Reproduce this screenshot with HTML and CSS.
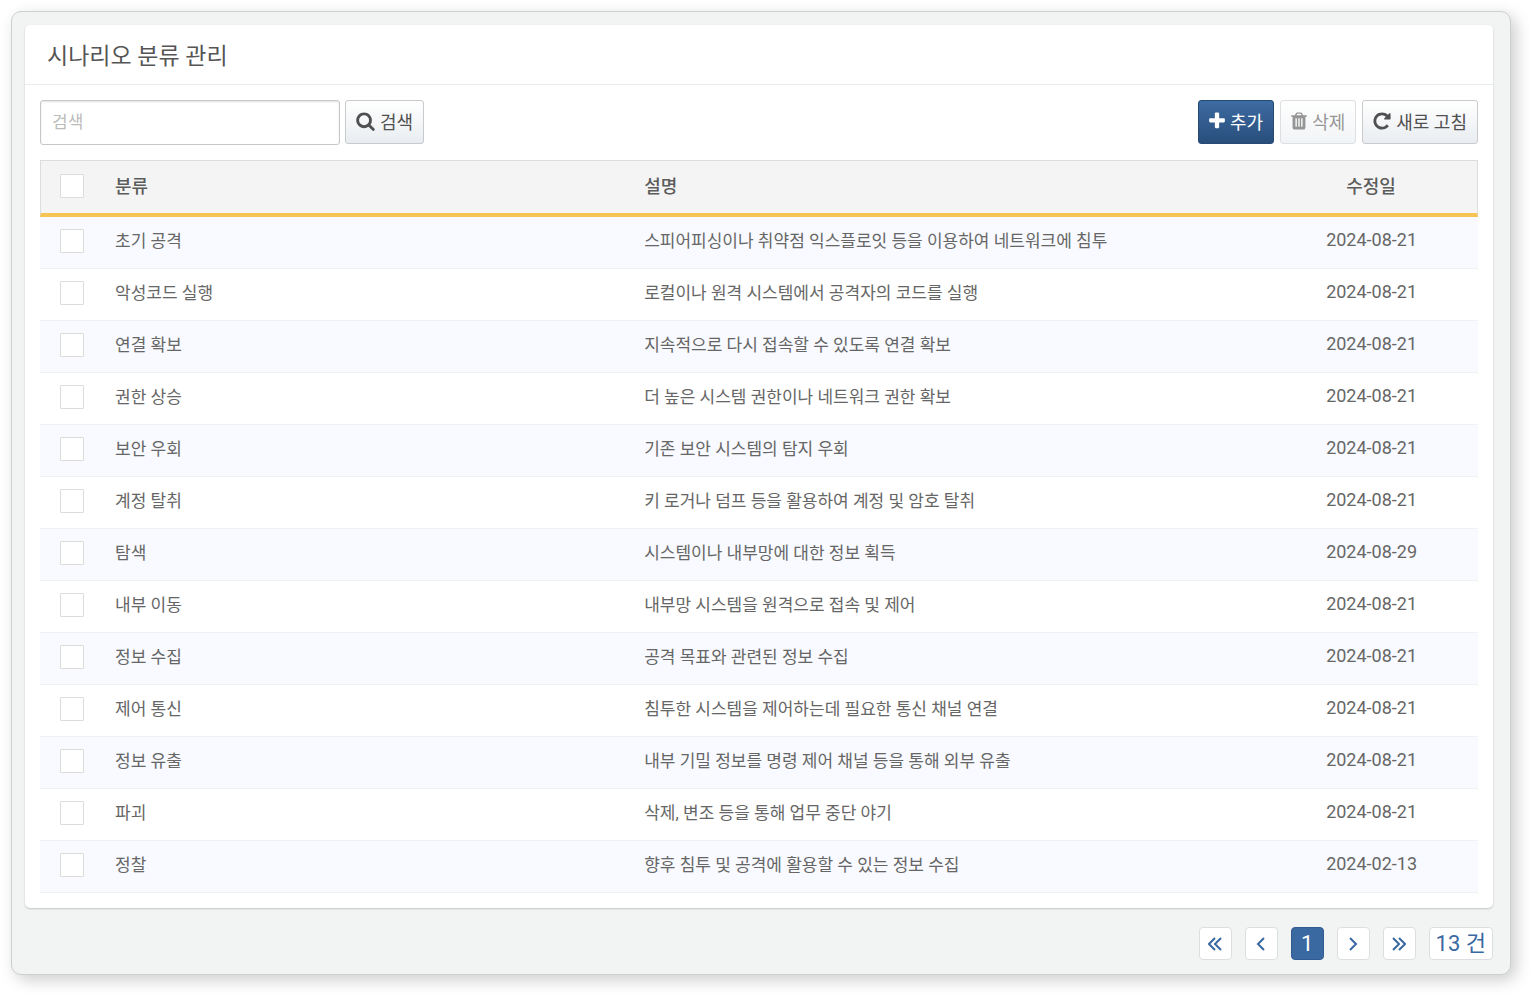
FILE: index.html
```html
<!DOCTYPE html>
<html lang="ko">
<head>
<meta charset="utf-8">
<title>시나리오 분류 관리</title>
<link rel="stylesheet" href="styles.css">
</head>
<body>
<main class="window">
  <section class="panel">
    <h1 class="panel-title">시나리오 분류 관리</h1>
    <div class="panel-body">
      <div class="toolbar">
        <form class="group">
          <input class="search" type="text" placeholder="검색" aria-label="검색">
          <button class="btn" type="button"><svg class="icon" width="19" height="20" viewBox="64 0 1664 1792"><path d="M1216 832q0-185-131.5-316.5t-316.5-131.5-316.5 131.5-131.5 316.5 131.5 316.5 316.5 131.5 316.5-131.5 131.5-316.5zm512 832q0 52-38 90t-90 38q-54 0-90-38l-343-342q-179 124-399 124-143 0-273.5-55.5t-225-150-150-225-55.5-273.5 55.5-273.5 150-225 225-150 273.5-55.5 273.5 55.5 225 150 150 225 55.5 273.5q0 220-124 399l343 343q37 37 37 90z"/></svg>검색</button>
        </form>
        <div class="group group-actions">
          <button class="btn btn-primary" type="button"><svg class="icon" width="16" height="20" viewBox="192 0 1408 1792"><path d="M1600 736v192q0 40-28 68t-68 28h-416v416q0 40-28 68t-68 28h-192q-40 0-68-28t-28-68v-416h-416q-40 0-68-28t-28-68v-192q0-40 28-68t68-28h416v-416q0-40 28-68t68-28h192q40 0 68 28t28 68v416h416q40 0 68 28t28 68z"/></svg>추가</button>
          <button class="btn" type="button" disabled><svg class="icon" width="16" height="20" viewBox="192 0 1408 1792"><path d="M704 1376v-704q0-14-9-23t-23-9h-64q-14 0-23 9t-9 23v704q0 14 9 23t23 9h64q14 0 23-9t9-23zm256 0v-704q0-14-9-23t-23-9h-64q-14 0-23 9t-9 23v704q0 14 9 23t23 9h64q14 0 23-9t9-23zm256 0v-704q0-14-9-23t-23-9h-64q-14 0-23 9t-9 23v704q0 14 9 23t23 9h64q14 0 23-9t9-23zm-544-992h448l-48-117q-7-9-17-11h-317q-10 2-17 11zm928 32v64q0 14-9 23t-23 9h-96v948q0 83-47 143.5t-113 60.5h-832q-66 0-113-58.5t-47-141.5v-952h-96q-14 0-23-9t-9-23v-64q0-14 9-23t23-9h309l70-167q15-37 54-63t79-26h320q40 0 79 26t54 63l70 167h309q14 0 23 9t9 23z"/></svg>삭제</button>
          <button class="btn" type="button"><svg class="icon" width="18" height="20" viewBox="128 0 1536 1792"><path d="M1664 256v448q0 26-19 45t-45 19h-448q-42 0-59-40-17-39 14-69l138-138q-148-137-349-137-104 0-198.5 40.5t-163.5 109.5-109.5 163.5-40.5 198.5 40.5 198.5 109.5 163.5 163.5 109.5 198.5 40.5q119 0 225-52t179-147q7-10 23-12 15 0 25 9l137 138q9 8 9.5 20.5t-7.5 22.5q-109 132-264 204.5t-327 72.5q-156 0-298-61t-245-164-164-245-61-298 61-298 164-245 245-164 298-61q147 0 284.5 55.5t244.5 156.5l130-129q29-31 70-14 39 17 39 59z"/></svg>새로 고침</button>
        </div>
      </div>
      <table class="grid">
        <thead>
          <tr><th class="col-check"><input class="check" type="checkbox" aria-label="전체 선택"></th><th class="col-name">분류</th><th>설명</th><th class="col-date">수정일</th></tr>
        </thead>
        <tbody>
          <tr><td><input class="check" type="checkbox" aria-label="초기 공격"></td><td>초기 공격</td><td>스피어피싱이나 취약점 익스플로잇 등을 이용하여 네트워크에 침투</td><td class="date">2024-08-21</td></tr>
          <tr><td><input class="check" type="checkbox" aria-label="악성코드 실행"></td><td>악성코드 실행</td><td>로컬이나 원격 시스템에서 공격자의 코드를 실행</td><td class="date">2024-08-21</td></tr>
          <tr><td><input class="check" type="checkbox" aria-label="연결 확보"></td><td>연결 확보</td><td>지속적으로 다시 접속할 수 있도록 연결 확보</td><td class="date">2024-08-21</td></tr>
          <tr><td><input class="check" type="checkbox" aria-label="권한 상승"></td><td>권한 상승</td><td>더 높은 시스템 권한이나 네트워크 권한 확보</td><td class="date">2024-08-21</td></tr>
          <tr><td><input class="check" type="checkbox" aria-label="보안 우회"></td><td>보안 우회</td><td>기존 보안 시스템의 탐지 우회</td><td class="date">2024-08-21</td></tr>
          <tr><td><input class="check" type="checkbox" aria-label="계정 탈취"></td><td>계정 탈취</td><td>키 로거나 덤프 등을 활용하여 계정 및 암호 탈취</td><td class="date">2024-08-21</td></tr>
          <tr><td><input class="check" type="checkbox" aria-label="탐색"></td><td>탐색</td><td>시스템이나 내부망에 대한 정보 획득</td><td class="date">2024-08-29</td></tr>
          <tr><td><input class="check" type="checkbox" aria-label="내부 이동"></td><td>내부 이동</td><td>내부망 시스템을 원격으로 접속 및 제어</td><td class="date">2024-08-21</td></tr>
          <tr><td><input class="check" type="checkbox" aria-label="정보 수집"></td><td>정보 수집</td><td>공격 목표와 관련된 정보 수집</td><td class="date">2024-08-21</td></tr>
          <tr><td><input class="check" type="checkbox" aria-label="제어 통신"></td><td>제어 통신</td><td>침투한 시스템을 제어하는데 필요한 통신 채널 연결</td><td class="date">2024-08-21</td></tr>
          <tr><td><input class="check" type="checkbox" aria-label="정보 유출"></td><td>정보 유출</td><td>내부 기밀 정보를 명령 제어 채널 등을 통해 외부 유출</td><td class="date">2024-08-21</td></tr>
          <tr><td><input class="check" type="checkbox" aria-label="파괴"></td><td>파괴</td><td>삭제, 변조 등을 통해 업무 중단 야기</td><td class="date">2024-08-21</td></tr>
          <tr><td><input class="check" type="checkbox" aria-label="정찰"></td><td>정찰</td><td>향후 침투 및 공격에 활용할 수 있는 정보 수집</td><td class="date">2024-02-13</td></tr>
        </tbody>
      </table>
    </div>
  </section>
  <nav class="pager" aria-label="페이지">
    <button class="page" type="button" aria-label="처음"><svg class="chevron" width="14" height="14" viewBox="0 0 14 14"><path d="M7 1L1 7l6 6M13 1L7 7l6 6"/></svg></button>
    <button class="page" type="button" aria-label="이전"><svg class="chevron" width="14" height="14" viewBox="0 0 14 14"><path d="M10 1L4 7l6 6"/></svg></button>
    <button class="page page-current" type="button" aria-current="page">1</button>
    <button class="page" type="button" aria-label="다음"><svg class="chevron" width="14" height="14" viewBox="0 0 14 14"><path d="M4 1l6 6-6 6"/></svg></button>
    <button class="page" type="button" aria-label="마지막"><svg class="chevron" width="14" height="14" viewBox="0 0 14 14"><path d="M1 1l6 6-6 6M7 1l6 6-6 6"/></svg></button>
    <span class="page">13 건</span>
  </nav>
</main>
</body>
</html>
```

FILE: styles.css
```css
* {
  box-sizing: border-box;
}

body {
  margin: 0;
  padding: 11px 22px 22px 11px;
  background: #fff;
  color: #555;
  font-family: Roboto, "Noto Sans CJK KR", sans-serif;
  font-size: 17px;
}

button,
input {
  margin: 0;
  font: inherit;
}

.window {
  padding: 13px 17px 14px 13px;
  border: 1px solid #ccd0cf;
  border-radius: 10px;
  background: #f2f4f4;
  box-shadow: 5px 5px 16px rgba(0, 0, 0, 0.2);
}

.panel {
  border-radius: 5px;
  background: #fff;
  box-shadow: 0 1px 2px rgba(0, 0, 0, 0.2);
}

.panel-title {
  margin: 0;
  padding: 16px 22px 11px;
  border-bottom: 1px solid #e9ecec;
  font-size: 23px;
  font-weight: 400;
  line-height: 32px;
}

.panel-body {
  padding: 15px;
}

.toolbar {
  display: flex;
  justify-content: space-between;
  align-items: flex-start;
  margin-bottom: 15px;
}

.group {
  display: flex;
  align-items: flex-start;
  gap: 5px;
}

.group-actions {
  gap: 6px;
}

.search {
  width: 300px;
  height: 45px;
  padding: 0 11px 2px;
  border: 1px solid #c6c8c8;
  border-radius: 3px;
  background: #fff;
  box-shadow: inset 0 1px 2px rgba(0, 0, 0, 0.12);
  color: #555;
}

.search::placeholder {
  color: #bbb;
}

.btn {
  display: flex;
  align-items: center;
  gap: 5px;
  height: 44px;
  padding: 0 10px 3px;
  border: 1px solid #c8cacc;
  border-radius: 3px;
  background: linear-gradient(#fff, #e9edf1);
  color: #505050;
  font-size: 18px;
  white-space: nowrap;
}

.btn:disabled {
  opacity: 0.6;
}

.btn-primary {
  border-color: #264a73;
  background: linear-gradient(#3d6ba3, #294e7a);
  color: #fff;
}

.icon {
  flex: none;
  fill: currentColor;
}

.grid {
  width: 100%;
  table-layout: fixed;
  border-collapse: separate;
  border-spacing: 0;
}

.grid th {
  height: 57px;
  padding: 0 15px 4px;
  border-top: 1px solid #dcdddd;
  border-bottom: 4px solid #f6c453;
  background: #f4f4f4;
  color: #5c5c5c;
  font-size: 18px;
  font-weight: 500;
  text-align: left;
}

.grid td {
  height: 52px;
  padding: 0 15px 6px;
  border-bottom: 1px solid #eff1f3;
  color: #666;
}

.grid tbody tr:nth-child(odd) {
  background: #f8faff;
}

.grid th:first-child {
  padding: 0 0 2px 19px;
  border-left: 1px solid #dcdddd;
}

.grid th:last-child {
  border-right: 1px solid #dcdddd;
}

.grid td:first-child {
  padding: 0 0 3px 20px;
}

.grid .col-check {
  width: 60px;
}

.grid .col-name {
  width: 36.8%;
}

.grid .col-date {
  width: 14.8%;
  text-align: center;
}

.grid .date {
  font-size: 18px;
  text-align: center;
}

.check {
  display: block;
  width: 24px;
  height: 24px;
  appearance: none;
  border: 1px solid #dcdcdc;
  border-radius: 1px;
  background: #fff;
}

.check:checked {
  background: #3a68a1;
}

.pager {
  display: flex;
  justify-content: flex-end;
  gap: 13px;
  margin-top: 19px;
}

.page {
  display: flex;
  justify-content: center;
  align-items: center;
  min-width: 33px;
  height: 33px;
  padding: 0 6px;
  border: 1px solid #dcdfdf;
  border-radius: 4px;
  background: #fff;
  color: #3a68a1;
  font-size: 22px;
  line-height: 30px;
}

.page-current {
  border-color: #325c91;
  background: #3a68a1;
  color: #fff;
}

.chevron {
  flex: none;
  fill: none;
  stroke: currentColor;
  stroke-width: 2;
}
```
